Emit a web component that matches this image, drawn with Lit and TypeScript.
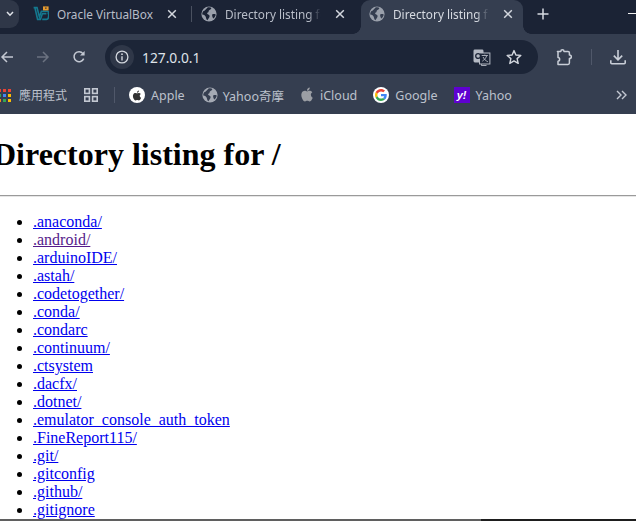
import { LitElement, html, css } from "lit";
import { customElement } from "lit/decorators.js";

const globe = (fill = "#9aa0ab", land = "#1b2335") => html`<svg class="ico16" viewBox="0 0 16 16"><circle cx="8" cy="8" r="7.6" fill="${fill}"/><path d="M2.2 5.2C4 4.6 5 3 6.5 1.4 8 1 9.5 1.2 10.3 1.8 10.6 3 9.2 3.6 8.2 4.2 7.2 4.8 8 6 7 6.6 5.6 6.9 6 8 7.2 8.6 8.7 9 9 10.4 8.2 11.4 7.4 12.6 7 13.6 6.4 14.2 5 13.4 5.2 11.4 4.6 10.4 3.8 9.4 2.6 8.4 1.2 8.6 1.2 7.2 1.6 6 2.2 5.2ZM11.4 8.2C12.6 7.8 13.8 7.8 14.7 8.4 14.5 10 13.6 11.6 12.3 12.6 11.5 11.4 10.6 9 11.4 8.2Z" fill="${land}"/></svg>`;

const appleD = "M12.152 6.896c-.948 0-2.415-1.078-3.96-1.04-2.04.027-3.91 1.183-4.961 3.014-2.117 3.675-.546 9.103 1.519 12.09 1.013 1.454 2.208 3.09 3.792 3.039 1.52-.065 2.09-.987 3.935-.987 1.831 0 2.35.987 3.96.948 1.637-.026 2.676-1.48 3.676-2.948 1.156-1.688 1.636-3.325 1.662-3.415-.039-.013-3.182-1.221-3.22-4.857-.026-3.04 2.48-4.494 2.597-4.559-1.429-2.09-3.623-2.324-4.39-2.376-2-.156-3.675 1.09-4.61 1.09zM15.53 3.83c.843-1.012 1.4-2.427 1.245-3.83-1.207.052-2.662.805-3.532 1.818-.78.896-1.454 2.338-1.273 3.714 1.338.104 2.715-.688 3.559-1.701";

const closeX = html`<svg class="close" viewBox="0 0 10 10"><path d="M1.2 1.2 8.8 8.8M8.8 1.2 1.2 8.8" stroke="#d3d7de" stroke-width="1.5" fill="none"/></svg>`;

const vbox = html`<svg class="ico16" viewBox="0 0 16 16"><path d="M.6 1.6 4 1.6 6.4 11 8.4 5.2H14.6C15.6 5.2 15.7 6.4 15.2 7.2 15.7 8 15.8 10 15.4 11.6 15.2 12.8 14.6 13.4 13.4 13.4H9.2" fill="none" stroke="#14798f" stroke-width="1.6"/><path d="M2 2 4.6 13.4H7.4L9.4 7.6H13.4" fill="none" stroke="#14798f" stroke-width="1.6"/><rect x="10" y=".4" width="5.6" height="4" fill="#e59a2f"/><rect x="12" y="1.6" width="1.6" height="1" fill="#1b2335"/></svg>`;

const files = [
  ".anaconda/", ".android/", ".arduinoIDE/", ".astah/", ".codetogether/", ".conda/", ".condarc",
  ".continuum/", ".ctsystem", ".dacfx/", ".dotnet/", ".emulator_console_auth_token",
  ".FineReport115/", ".git/", ".gitconfig", ".github/", ".gitignore",
];

const appColors = ["#ea4335", "#ea4335", "#ea4335", "#34a853", "#4285f4", "#fbbc05", "#f6891f", "#34a853", "#fbbc05"];

@customElement("app-root")
export class AppRoot extends LitElement {
  static styles = css`
    :host { display: flex; flex-direction: column; width: 636px; height: 521px; overflow: hidden; background: #fff; font-family: "Noto Sans", "Noto Sans CJK TC", sans-serif; }
    svg { display: block; flex: none; }
    .ico16 { width: 16px; height: 16px; }

    .strip { height: 34px; flex: none; background: #1b2335; display: flex; align-items: flex-start; }
    .collapse { width: 19px; height: 28px; flex: none; margin-right: 4px; background: #2f3748; border-radius: 0 9px 9px 0; display: flex; align-items: center; justify-content: flex-end; padding-right: 5px; box-sizing: border-box; }
    .tab { position: relative; width: 168px; height: 34px; flex: none; box-sizing: border-box; padding: 0 14px 6px 10px; display: flex; align-items: center; font-size: 11.8px; color: #b8bdc8; }
    .tab > * { position: relative; }
    .tab .title { flex: 1; min-width: 0; margin-left: 8px; white-space: nowrap; overflow: hidden; }
    .tab .title.fade { -webkit-mask-image: linear-gradient(to right, #000 80%, transparent 92%); mask-image: linear-gradient(to right, #000 80%, transparent 92%); }
    .tab.sep::after { content: ""; position: absolute; right: -1px; top: 6px; width: 1px; height: 16px; background: #4a5160; }
    .tab.active { color: #d6dae1; }
    .tab.active::before { content: ""; position: absolute; left: 2px; right: 4px; top: 0; bottom: 0; background: #353e50; border-radius: 9px 9px 0 0; }
    .flare { position: absolute !important; bottom: 0; width: 8px; height: 8px; background: radial-gradient(circle at var(--cx) 0, transparent 7.5px, #353e50 8px); }
    .flare.l { left: -6px; --cx: 0; }
    .flare.r { right: -4px; --cx: 100%; }
    .close { width: 10px; height: 10px; flex: none; margin-left: 6px; }
    .plus { margin-left: 9px; margin-top: 7px; width: 14px; height: 14px; }
    .win { margin-left: auto; margin-top: 13px; width: 8px; height: 1px; background: #f0f0f0; }

    .toolbar { height: 45px; flex: none; box-sizing: border-box; padding: 6px 0 5px; background: #353e50; display: flex; align-items: center; }
    .nav { width: 36px; flex: none; display: flex; justify-content: center; }
    .nav.first { margin-left: -11px; }
    .omni { width: 433px; height: 34px; flex: none; margin-left: 8px; background: #1c2537; border-radius: 17px; display: flex; align-items: center; box-sizing: border-box; padding-left: 5px; color: #dfe3e9; font-size: 13.8px; }
    .chip { width: 24px; height: 24px; border-radius: 50%; background: #2f3748; display: flex; align-items: center; justify-content: center; flex: none; }
    .url { margin-left: 8px; flex: 1; }
    .omni .tr { margin-right: 15px; }
    .omni .star { margin-right: 16px; }
    .ext { margin-left: 17px; }
    .vsep { width: 1px; height: 16px; background: #50586a; flex: none; }
    .tool-sep { margin-left: 18px; }
    .dl { margin-left: 18px; }

    .bookmarks { height: 35px; flex: none; box-sizing: border-box; padding-bottom: 3px; background: #353e50; display: flex; align-items: center; font-size: 12.5px; color: #bcc1cc; white-space: nowrap; }
    .apps { display: grid; grid-template-columns: repeat(3, 3px); gap: 2px; flex: none; margin-left: -2px; }
    .apps i { display: block; width: 3px; height: 3px; }
    .bm { display: flex; align-items: center; gap: 6px; flex: none; }
    .bm .cjk { font-size: 12px; margin-left: 2px; }
    .grid-ico { margin-left: 17px; }
    .bsep { margin-left: 16px; height: 16px; }
    .round { width: 16px; height: 16px; border-radius: 50%; background: #fff; display: flex; align-items: center; justify-content: center; flex: none; }
    .yh { width: 16px; height: 16px; background: #5f01d1; color: #fff; font: bold 11px/16px "Liberation Sans", sans-serif; text-align: center; flex: none; font-style: italic; }
    .more { margin-left: auto; margin-right: 9px; }
    .m-apple { margin-left: 14px; }
    .m-yahoo-tw { margin-left: 17px; gap: 5px; }
    .m-icloud { margin-left: 16px; }
    .m-google { margin-left: 16px; }
    .m-yahoo { margin-left: 16px; }

    main { flex: 1; min-height: 0; overflow: hidden; background: #fff; color: #000; font-family: "Liberation Serif", "Times New Roman", serif; font-size: 16px; }
    h1 { margin: 22px 0 22px -7px; font-size: 32px; line-height: 37px; font-weight: bold; white-space: nowrap; }
    hr { margin: 0 0 16px; border: 0; border-top: 1px solid #9a9a9a; border-bottom: 1px solid #e6e6e6; height: 0; }
    ul { margin: 0; padding: 0 0 0 33px; line-height: 18px; }
    a { color: #0000ee; text-decoration: underline; }
    a.seen { color: #551a8b; }

    .taskbar { height: 2px; flex: none; display: flex; }
    .taskbar .a { width: 481px; background: #5f5f5f; }
    .taskbar .b { flex: 1; background: #1e1e1e; }
  `;

  render() {
    return html`
      <div class="strip">
        <div class="collapse"><svg width="8" height="6" viewBox="0 0 8 6"><path d="M1 1 4 4.2 7 1" fill="none" stroke="#dfe2e8" stroke-width="1.5"/></svg></div>
        <div class="tab sep">${vbox}<span class="title">Oracle VirtualBox</span>${closeX}</div>
        <div class="tab">${globe()}<span class="title fade">Directory listing for /</span>${closeX}</div>
        <div class="tab active"><span class="flare l"></span><span class="flare r"></span>${globe("#9aa0ab", "#353e50")}<span class="title fade">Directory listing for /</span>${closeX}</div>
        <svg class="plus" viewBox="0 0 14 14"><path d="M7 1.5V12.5M1.5 7H12.5" stroke="#d6dae1" stroke-width="1.5"/></svg>
        <div class="win"></div>
      </div>

      <div class="toolbar">
        <div class="nav first"><svg width="14" height="14" viewBox="0 0 14 14"><path d="M13 7H2M7 2 2 7 7 12" fill="none" stroke="#c3c8d2" stroke-width="1.5"/></svg></div>
        <div class="nav"><svg width="14" height="14" viewBox="0 0 14 14"><path d="M1 7H12M7 2 12 7 7 12" fill="none" stroke="#6b7280" stroke-width="1.5"/></svg></div>
        <div class="nav"><svg width="14" height="14" viewBox="0 0 14 14"><path d="M11.7 8.6A5 5 0 1 1 11 3.6" fill="none" stroke="#c3c8d2" stroke-width="1.5"/><path d="M12.6 1V5.6H8Z" fill="#c3c8d2"/></svg></div>
        <div class="omni">
          <div class="chip"><svg width="14" height="14" viewBox="0 0 14 14"><circle cx="7" cy="7" r="5.9" fill="none" stroke="#d3d7de" stroke-width="1.3"/><path d="M7 6.2V10.4" stroke="#d3d7de" stroke-width="1.4"/><circle cx="7" cy="4.2" r=".9" fill="#d3d7de"/></svg></div>
          <span class="url">127.0.0.1</span>
          <svg class="tr" width="18" height="17" viewBox="0 0 17 17"><rect x="0" y="0.5" width="10" height="13" rx="1.4" fill="#b4b9c3"/><rect x="6" y="4" width="10.4" height="11" fill="#1c2537" stroke="#b4b9c3" stroke-width="1"/><path d="M8 15.2V16.6H13" fill="none" stroke="#b4b9c3"/><circle cx="4.6" cy="7" r="2.4" fill="none" stroke="#1c2537" stroke-width="1.3"/><path d="M8.2 6.5H14.4M11.3 5.6V6.5M13.2 6.6C12.8 8.6 10.8 11 8.8 12.2M9.6 8C10.4 10 12 11.6 14.4 12.8" fill="none" stroke="#b4b9c3" stroke-width=".9"/></svg>
          <svg class="star" width="16" height="16" viewBox="0 0 16 16"><path d="M8 1.6 9.9 6 14.8 6.4 11.1 9.6 12.2 14.4 8 11.9 3.8 14.4 4.9 9.6 1.2 6.4 6.1 6Z" fill="none" stroke="#d3d7de" stroke-width="1.4" stroke-linejoin="round"/></svg>
        </div>
        <svg class="ext" width="18" height="17" viewBox="0 0 18 17"><path d="M2 2.8H5.4C5.4 .6 8.6 .6 8.6 2.8H12.6C13.4 2.8 14 3.4 14 4.2V6.4C16.6 6.4 16.6 10 14 10V14.4C14 15.2 13.4 15.8 12.6 15.8H2.6V12.6C4.8 12.6 4.8 8.8 2.6 8.8V2.8Z" transform="translate(.4 -.4)" fill="none" stroke="#c9ced7" stroke-width="1.5" stroke-linejoin="round"/></svg>
        <div class="vsep tool-sep"></div>
        <svg class="dl" width="16" height="16" viewBox="0 0 16 16"><path d="M8 1V10.5M3.8 6.6 8 10.8 12.2 6.6" fill="none" stroke="#c9ced7" stroke-width="1.6"/><path d="M.8 11.2V13.8C.8 14.4 1.2 14.8 1.8 14.8H14.2C14.8 14.8 15.2 14.4 15.2 13.8V11.2" fill="none" stroke="#c9ced7" stroke-width="1.6"/></svg>
      </div>

      <div class="bookmarks">
        <div class="bm">
          <div class="apps">${appColors.map((c) => html`<i style="background:${c}"></i>`)}</div>
          <span class="cjk">應用程式</span>
        </div>
        <svg class="grid-ico" width="14" height="14" viewBox="0 0 14 14"><g fill="none" stroke="#c3c8d2" stroke-width="1.6"><rect x=".8" y=".8" width="4.6" height="4.6"/><rect x="8.6" y=".8" width="4.6" height="4.6"/><rect x=".8" y="8.6" width="4.6" height="4.6"/><rect x="8.6" y="8.6" width="4.6" height="4.6"/></g></svg>
        <div class="vsep bsep"></div>
        <div class="bm m-apple"><div class="round"><svg width="10" height="11" viewBox="0 0 24 24"><path d="${appleD}" fill="#333"/></svg></div><span>Apple</span></div>
        <div class="bm m-yahoo-tw">${globe("#a5aab4", "#353e50")}<span>Yahoo奇摩</span></div>
        <div class="bm m-icloud"><svg width="14" height="16" viewBox="0 0 24 26"><path d="${appleD}" fill="#9b9ea4"/></svg><span>iCloud</span></div>
        <div class="bm m-google"><div class="round"><svg width="12" height="12" viewBox="0 0 48 48"><path fill="#EA4335" d="M24 9.5c3.54 0 6.71 1.22 9.21 3.6l6.85-6.85C35.9 2.38 30.47 0 24 0 14.62 0 6.51 5.38 2.56 13.22l7.98 6.19C12.43 13.72 17.74 9.5 24 9.5z"/><path fill="#4285F4" d="M46.98 24.55c0-1.57-.15-3.09-.38-4.55H24v9.02h12.94c-.58 2.96-2.26 5.48-4.78 7.18l7.73 6c4.51-4.18 7.09-10.36 7.09-17.65z"/><path fill="#FBBC05" d="M10.53 28.59c-.48-1.45-.76-2.99-.76-4.59s.27-3.14.76-4.59l-7.98-6.19C.92 16.46 0 20.12 0 24c0 3.88.92 7.54 2.56 10.78l7.97-6.19z"/><path fill="#34A853" d="M24 48c6.48 0 11.93-2.13 15.89-5.81l-7.73-6c-2.15 1.45-4.92 2.3-8.16 2.3-6.26 0-11.57-4.22-13.47-9.91l-7.98 6.19C6.51 42.62 14.62 48 24 48z"/></svg></div><span>Google</span></div>
        <div class="bm m-yahoo"><div class="yh">y!</div><span>Yahoo</span></div>
        <svg class="more" width="11" height="10" viewBox="0 0 11 10"><path d="M1 1 5 5 1 9M6 1 10 5 6 9" fill="none" stroke="#c3c8d2" stroke-width="1.4"/></svg>
      </div>

      <main>
        <h1>Directory listing for /</h1>
        <hr />
        <ul>
          ${files.map((f) => html`<li><a class="${f === ".android/" ? "seen" : ""}" href="#">${f}</a></li>`)}
        </ul>
      </main>
      <div class="taskbar"><div class="a"></div><div class="b"></div></div>
    `;
  }
}
